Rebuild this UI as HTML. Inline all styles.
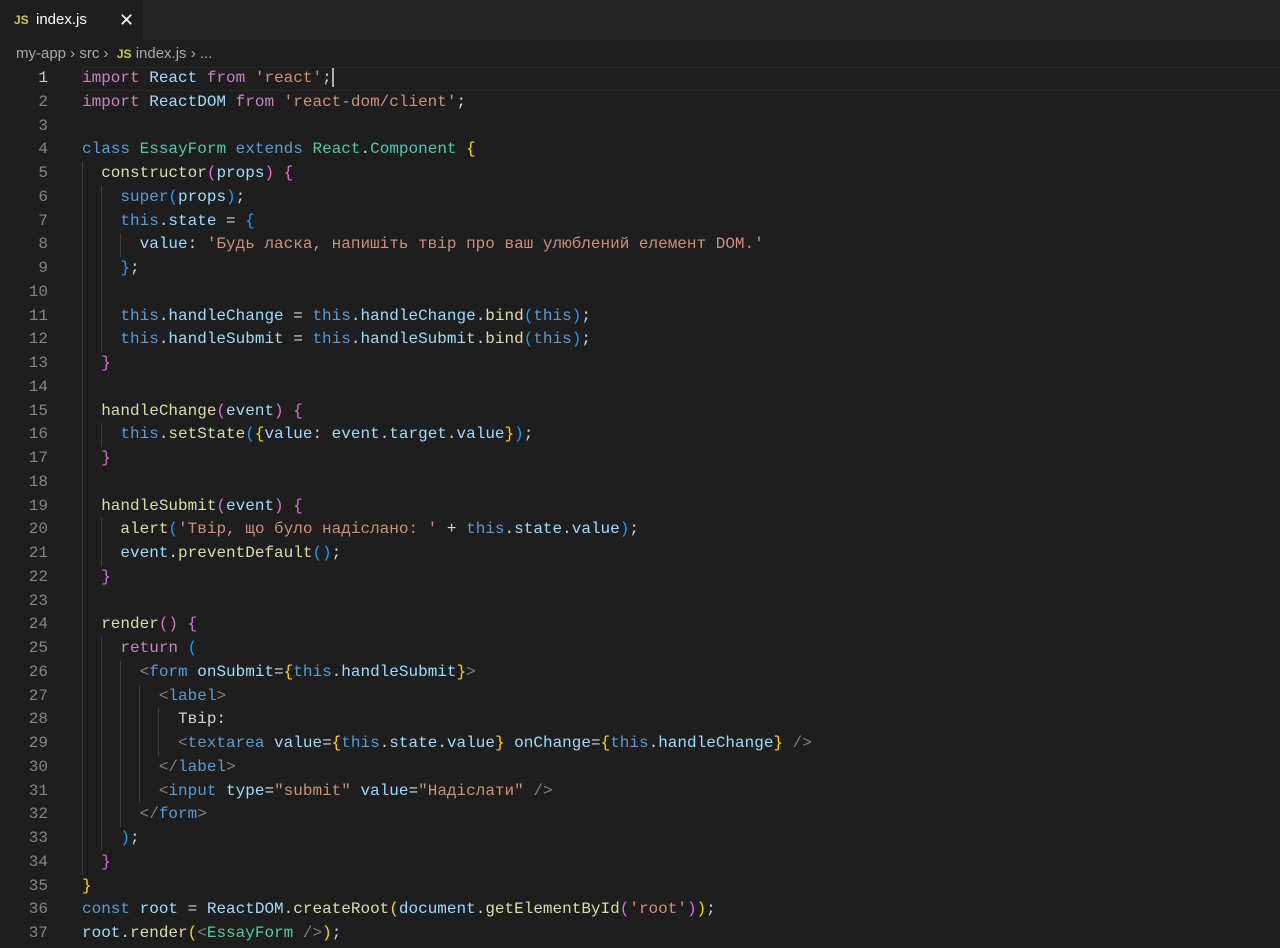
<!DOCTYPE html>
<html><head><meta charset="utf-8"><style>
*{margin:0;padding:0;box-sizing:border-box}
body{width:1280px;height:948px;background:#1e1e1e;overflow:hidden;font-family:"Liberation Sans",sans-serif;position:relative}
.tabs{height:40px;background:#252526;position:relative}
.tab{position:absolute;left:0;top:0;width:143px;height:40px;background:#1e1e1e;color:#fff;font-size:15px;line-height:40px}
.js{color:#cbcb41;font-weight:bold;font-size:12px;font-family:"Liberation Sans",sans-serif}
.crumb{position:absolute;top:44px;left:16px;color:#a9a9a9;font-size:15px;line-height:20px}
.ed{position:absolute;top:67px;left:0;right:0}
.ln{height:23.75px;line-height:23.75px;font-family:"Liberation Mono",monospace;font-size:16px;white-space:pre;position:relative;color:#d4d4d4}
.n{position:absolute;left:0;width:48px;text-align:right;color:#858585}
.c{position:absolute;left:82px}
.g{position:absolute;top:0;height:23.75px;width:1px;background:#404040}
.k{color:#c586c0}.b{color:#569cd6}.v{color:#9cdcfe}.s{color:#ce9178}.f{color:#dcdcaa}.t{color:#4ec9b0}.p{color:#808080}
.y{color:#ffd700}.m{color:#da70d6}.u{color:#179fff}
</style></head><body>
<div class="tabs"><div class="tab"><span class="js" style="position:absolute;left:14px">JS</span><span style="position:absolute;left:36px">index.js</span><span style="position:absolute;left:119px;font-size:18px">✕</span></div></div>
<div class="crumb">my-app ›&nbsp;src ›&nbsp; <span class="js">JS</span> index.js › ...</div>
<div style="position:absolute;top:67px;left:82px;width:1198px;height:24px;border:1px solid #282828;border-right:none"></div>
<div class="ed">
<div class="ln"><span class="n" style="color:#c6c6c6">1</span><span class="c"><span class="k">import</span> <span class="v">React</span> <span class="k">from</span> <span class="s">'react'</span>;<span style="display:inline-block;width:2px;height:19px;background:#aeafad;vertical-align:middle"></span></span></div>
<div class="ln"><span class="n">2</span><span class="c"><span class="k">import</span> <span class="v">ReactDOM</span> <span class="k">from</span> <span class="s">'react-dom/client'</span>;</span></div>
<div class="ln"><span class="n">3</span></div>
<div class="ln"><span class="n">4</span><span class="c"><span class="b">class</span> <span class="t">EssayForm</span> <span class="b">extends</span> <span class="t">React</span>.<span class="t">Component</span> <span class="y">{</span></span></div>
<div class="ln"><span class="n">5</span><i class="g" style="left:82px"></i><span class="c">  <span class="f">constructor</span><span class="m">(</span><span class="v">props</span><span class="m">)</span> <span class="m">{</span></span></div>
<div class="ln"><span class="n">6</span><i class="g" style="left:82px"></i><i class="g" style="left:101px"></i><span class="c">    <span class="b">super</span><span class="u">(</span><span class="v">props</span><span class="u">)</span>;</span></div>
<div class="ln"><span class="n">7</span><i class="g" style="left:82px"></i><i class="g" style="left:101px"></i><span class="c">    <span class="b">this</span>.<span class="v">state</span> = <span class="u">{</span></span></div>
<div class="ln"><span class="n">8</span><i class="g" style="left:82px"></i><i class="g" style="left:101px"></i><i class="g" style="left:120px"></i><span class="c">      <span class="v">value</span>: <span class="s">'Будь ласка, напишіть твір про ваш улюблений елемент DOM.'</span></span></div>
<div class="ln"><span class="n">9</span><i class="g" style="left:82px"></i><i class="g" style="left:101px"></i><span class="c">    <span class="u">}</span>;</span></div>
<div class="ln"><span class="n">10</span><i class="g" style="left:82px"></i><i class="g" style="left:101px"></i></div>
<div class="ln"><span class="n">11</span><i class="g" style="left:82px"></i><i class="g" style="left:101px"></i><span class="c">    <span class="b">this</span>.<span class="v">handleChange</span> = <span class="b">this</span>.<span class="v">handleChange</span>.<span class="f">bind</span><span class="u">(</span><span class="b">this</span><span class="u">)</span>;</span></div>
<div class="ln"><span class="n">12</span><i class="g" style="left:82px"></i><i class="g" style="left:101px"></i><span class="c">    <span class="b">this</span>.<span class="v">handleSubmit</span> = <span class="b">this</span>.<span class="v">handleSubmit</span>.<span class="f">bind</span><span class="u">(</span><span class="b">this</span><span class="u">)</span>;</span></div>
<div class="ln"><span class="n">13</span><i class="g" style="left:82px"></i><span class="c">  <span class="m">}</span></span></div>
<div class="ln"><span class="n">14</span><i class="g" style="left:82px"></i></div>
<div class="ln"><span class="n">15</span><i class="g" style="left:82px"></i><span class="c">  <span class="f">handleChange</span><span class="m">(</span><span class="v">event</span><span class="m">)</span> <span class="m">{</span></span></div>
<div class="ln"><span class="n">16</span><i class="g" style="left:82px"></i><i class="g" style="left:101px"></i><span class="c">    <span class="b">this</span>.<span class="f">setState</span><span class="u">(</span><span class="y">{</span><span class="v">value</span>: <span class="v">event</span>.<span class="v">target</span>.<span class="v">value</span><span class="y">}</span><span class="u">)</span>;</span></div>
<div class="ln"><span class="n">17</span><i class="g" style="left:82px"></i><span class="c">  <span class="m">}</span></span></div>
<div class="ln"><span class="n">18</span><i class="g" style="left:82px"></i></div>
<div class="ln"><span class="n">19</span><i class="g" style="left:82px"></i><span class="c">  <span class="f">handleSubmit</span><span class="m">(</span><span class="v">event</span><span class="m">)</span> <span class="m">{</span></span></div>
<div class="ln"><span class="n">20</span><i class="g" style="left:82px"></i><i class="g" style="left:101px"></i><span class="c">    <span class="f">alert</span><span class="u">(</span><span class="s">'Твір, що було надіслано: '</span> + <span class="b">this</span>.<span class="v">state</span>.<span class="v">value</span><span class="u">)</span>;</span></div>
<div class="ln"><span class="n">21</span><i class="g" style="left:82px"></i><i class="g" style="left:101px"></i><span class="c">    <span class="v">event</span>.<span class="f">preventDefault</span><span class="u">()</span>;</span></div>
<div class="ln"><span class="n">22</span><i class="g" style="left:82px"></i><span class="c">  <span class="m">}</span></span></div>
<div class="ln"><span class="n">23</span><i class="g" style="left:82px"></i></div>
<div class="ln"><span class="n">24</span><i class="g" style="left:82px"></i><span class="c">  <span class="f">render</span><span class="m">()</span> <span class="m">{</span></span></div>
<div class="ln"><span class="n">25</span><i class="g" style="left:82px"></i><i class="g" style="left:101px"></i><span class="c">    <span class="k">return</span> <span class="u">(</span></span></div>
<div class="ln"><span class="n">26</span><i class="g" style="left:82px"></i><i class="g" style="left:101px"></i><i class="g" style="left:120px"></i><span class="c">      <span class="p">&lt;</span><span class="b">form</span> <span class="v">onSubmit</span>=<span class="y">{</span><span class="b">this</span>.<span class="v">handleSubmit</span><span class="y">}</span><span class="p">&gt;</span></span></div>
<div class="ln"><span class="n">27</span><i class="g" style="left:82px"></i><i class="g" style="left:101px"></i><i class="g" style="left:120px"></i><i class="g" style="left:139px"></i><span class="c">        <span class="p">&lt;</span><span class="b">label</span><span class="p">&gt;</span></span></div>
<div class="ln"><span class="n">28</span><i class="g" style="left:82px"></i><i class="g" style="left:101px"></i><i class="g" style="left:120px"></i><i class="g" style="left:139px"></i><i class="g" style="left:158px"></i><span class="c">          Твір:</span></div>
<div class="ln"><span class="n">29</span><i class="g" style="left:82px"></i><i class="g" style="left:101px"></i><i class="g" style="left:120px"></i><i class="g" style="left:139px"></i><i class="g" style="left:158px"></i><span class="c">          <span class="p">&lt;</span><span class="b">textarea</span> <span class="v">value</span>=<span class="y">{</span><span class="b">this</span>.<span class="v">state</span>.<span class="v">value</span><span class="y">}</span> <span class="v">onChange</span>=<span class="y">{</span><span class="b">this</span>.<span class="v">handleChange</span><span class="y">}</span> <span class="p">/&gt;</span></span></div>
<div class="ln"><span class="n">30</span><i class="g" style="left:82px"></i><i class="g" style="left:101px"></i><i class="g" style="left:120px"></i><i class="g" style="left:139px"></i><span class="c">        <span class="p">&lt;/</span><span class="b">label</span><span class="p">&gt;</span></span></div>
<div class="ln"><span class="n">31</span><i class="g" style="left:82px"></i><i class="g" style="left:101px"></i><i class="g" style="left:120px"></i><i class="g" style="left:139px"></i><span class="c">        <span class="p">&lt;</span><span class="b">input</span> <span class="v">type</span>=<span class="s">"submit"</span> <span class="v">value</span>=<span class="s">"Надіслати"</span> <span class="p">/&gt;</span></span></div>
<div class="ln"><span class="n">32</span><i class="g" style="left:82px"></i><i class="g" style="left:101px"></i><i class="g" style="left:120px"></i><span class="c">      <span class="p">&lt;/</span><span class="b">form</span><span class="p">&gt;</span></span></div>
<div class="ln"><span class="n">33</span><i class="g" style="left:82px"></i><i class="g" style="left:101px"></i><span class="c">    <span class="u">)</span>;</span></div>
<div class="ln"><span class="n">34</span><i class="g" style="left:82px"></i><span class="c">  <span class="m">}</span></span></div>
<div class="ln"><span class="n">35</span><span class="c"><span class="y">}</span></span></div>
<div class="ln"><span class="n">36</span><span class="c"><span class="b">const</span> <span class="v">root</span> = <span class="v">ReactDOM</span>.<span class="f">createRoot</span><span class="y">(</span><span class="v">document</span>.<span class="f">getElementById</span><span class="m">(</span><span class="s">'root'</span><span class="m">)</span><span class="y">)</span>;</span></div>
<div class="ln"><span class="n">37</span><span class="c"><span class="v">root</span>.<span class="f">render</span><span class="y">(</span><span class="p">&lt;</span><span class="t">EssayForm</span> <span class="p">/&gt;</span><span class="y">)</span>;</span></div>
</div>
</body></html>
